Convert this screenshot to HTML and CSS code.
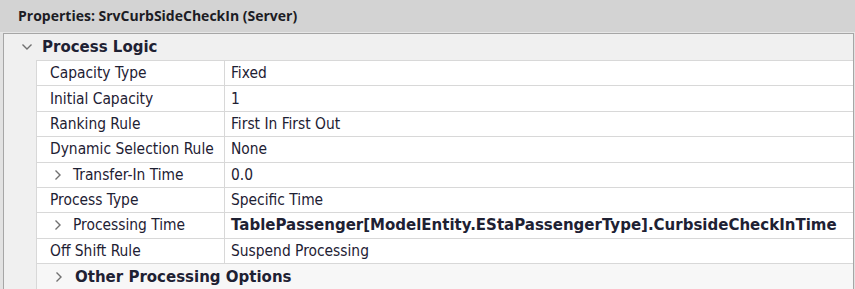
FILE: index.html
```html
<!DOCTYPE html>
<html lang="en">

<head>
    <meta charset="UTF-8">
    <meta name="viewport" content="width=device-width, initial-scale=1.0">
    <link rel="stylesheet" href="styles.css">
    <title>Properties</title>
</head>

<body>

    <div class="title">Properties: SrvCurbSideCheckIn (Server)</div>

    <main class="panel">

        <div class="category">
            <svg class="chev-down" width="12" height="8" viewBox="0 0 12 8">
                <polyline points="1.5,1.5 6,6 10.5,1.5" />
            </svg>
            <span>Process Logic</span>
        </div>

        <div class="rows">
            <div class="row">
                <div class="name">Capacity Type</div>
                <div class="value">Fixed</div>
            </div>
            <div class="row">
                <div class="name">Initial Capacity</div>
                <div class="value">1</div>
            </div>
            <div class="row">
                <div class="name">Ranking Rule</div>
                <div class="value">First In First Out</div>
            </div>
            <div class="row">
                <div class="name">Dynamic Selection Rule</div>
                <div class="value">None</div>
            </div>
            <div class="row">
                <div class="name sub">
                    <svg class="chev-right" width="8" height="12" viewBox="0 0 8 12">
                        <polyline points="1.5,1.5 6,6 1.5,10.5" />
                    </svg>
                    Transfer-In Time
                </div>
                <div class="value">0.0</div>
            </div>
            <div class="row">
                <div class="name">Process Type</div>
                <div class="value">Specific Time</div>
            </div>
            <div class="row">
                <div class="name sub">
                    <svg class="chev-right" width="8" height="12" viewBox="0 0 8 12">
                        <polyline points="1.5,1.5 6,6 1.5,10.5" />
                    </svg>
                    Processing Time
                </div>
                <div class="value bold">TablePassenger[ModelEntity.EStaPassengerType].CurbsideCheckInTime</div>
            </div>
            <div class="row">
                <div class="name">Off Shift Rule</div>
                <div class="value">Suspend Processing</div>
            </div>
            <div class="row group">
                <svg class="chev-right" width="8" height="12" viewBox="0 0 8 12">
                    <polyline points="1.5,1.5 6,6 1.5,10.5" />
                </svg>
                <span>Other Processing Options</span>
            </div>
        </div>

    </main>

</body>

</html>
```

FILE: styles.css
```css
*{
    padding: 0;
    margin: 0;
    box-sizing: border-box;
}
html{
    font-family: "DejaVu Sans Condensed", "DejaVu Sans", sans-serif;
    font-size: 15.4px;
}
body{
    background: #e2e2e2;
    color: #1e2133;
    width: 855px;
    height: 289px;
    overflow: hidden;
}

.title{
    height: 33px;
    background: #d3d3d3;
    border-bottom: 1px solid #e6e6e6;
    padding-left: 18px;
    line-height: 32px;
    font-family: "Open Sans", sans-serif;
    font-size: 14px;
    font-weight: 700;
    color: #1c1c24;
}

main.panel{
    margin-left: 3px;
    width: 851px;
    height: 260px;
    border: 1px solid #a6a6a6;
    border-bottom: none;
    background: #f0f0f0;
}

.category{
    height: 26px;
    display: flex;
    align-items: center;
    font-family: "DejaVu Sans", sans-serif;
    font-size: 15px;
    font-weight: bold;
}
.chev-down{
    margin-left: 17px;
    margin-right: 9px;
}
svg polyline{
    fill: none;
    stroke: #707070;
    stroke-width: 1.4;
}

.rows{
    margin-left: 32px;
    border-left: 1px solid #d8d8d8;
}
.row{
    height: 25.375px;
    display: grid;
    grid-template-columns: 188px 1fr;
    border-top: 1px solid #d8d8d8;
    background: #fff;
}
.name{
    padding-left: 13px;
    border-right: 1px solid #d8d8d8;
    display: flex;
    align-items: center;
}
.value{
    padding-left: 6px;
    display: flex;
    align-items: center;
    white-space: nowrap;
}
.value.bold{
    font-family: "DejaVu Sans", sans-serif;
    font-size: 15px;
    font-weight: bold;
}
.name.sub .chev-right{
    margin-left: 4px;
    margin-right: 11px;
}

.row.group{
    display: flex;
    align-items: center;
    background: #f7f7f7;
    font-family: "DejaVu Sans", sans-serif;
    font-size: 15px;
    font-weight: bold;
    height: 26px;
}
.row.group .chev-right{
    margin-left: 18px;
    margin-right: 12px;
}
```
